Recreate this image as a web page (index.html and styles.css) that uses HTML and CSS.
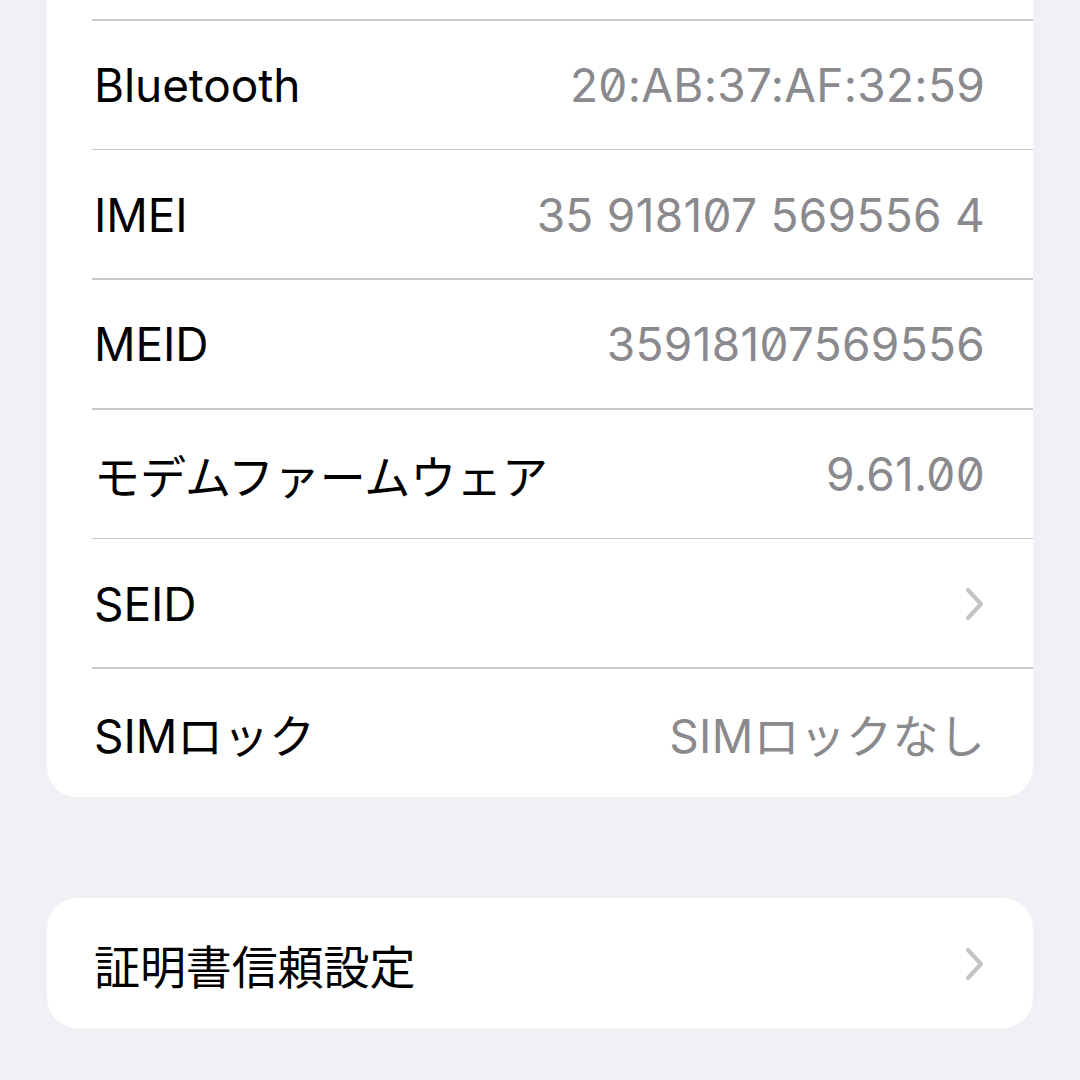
FILE: index.html
```html
<!DOCTYPE html>
<html lang="ja">
<head>
  <meta charset="UTF-8">
  <meta name="viewport" content="width=device-width, initial-scale=1.0">
  <title>情報</title>
  <link rel="stylesheet" href="styles.css">
</head>
<body>
  <div class="page">
    <div class="group group-top">
      <div class="row-stub"></div>
      <div class="row">
        <span class="label">Bluetooth</span>
        <span class="value">20:AB:37:AF:32:59</span>
      </div>
      <div class="row">
        <span class="label">IMEI</span>
        <span class="value">35 918107 569556 4</span>
      </div>
      <div class="row">
        <span class="label">MEID</span>
        <span class="value">35918107569556</span>
      </div>
      <div class="row">
        <span class="label">モデムファームウェア</span>
        <span class="value">9.61.00</span>
      </div>
      <div class="row">
        <span class="label">SEID</span>
        <svg class="chevron" viewBox="0 0 20 34" width="20" height="34">
          <path d="M3 3 L16 17 L3 31" fill="none" stroke="#c4c4c7" stroke-width="4.2" stroke-linecap="round" stroke-linejoin="round"/>
        </svg>
      </div>
      <div class="row">
        <span class="label">SIMロック</span>
        <span class="value">SIMロックなし</span>
      </div>
    </div>

    <div class="group">
      <div class="row">
        <span class="label">証明書信頼設定</span>
        <svg class="chevron" viewBox="0 0 20 34" width="20" height="34">
          <path d="M3 3 L16 17 L3 31" fill="none" stroke="#c4c4c7" stroke-width="4.2" stroke-linecap="round" stroke-linejoin="round"/>
        </svg>
      </div>
    </div>
  </div>
</body>
</html>
```

FILE: styles.css
```css
html, body {
  margin: 0;
  padding: 0;
  background-color: #f0f0f5;
}
body {
  font-family: Inter, "Noto Sans CJK JP", sans-serif;
  overflow: hidden;
  height: 1080px;
}
.page {
  padding: 0 47px;
}
.group {
  background-color: #fff;
  border-radius: 30px;
  overflow: hidden;
  margin-top: 101px;
}
.group-top {
  margin-top: 0;
  border-radius: 0 0 30px 30px;
}
.row-stub {
  height: 19px;
}
.row {
  height: 129.7px;
  display: flex;
  align-items: center;
  justify-content: space-between;
  padding: 2px 48px 0 47px;
  position: relative;
  box-sizing: border-box;
}
.row-stub + .row::before,
.row + .row::before {
  content: "";
  position: absolute;
  top: 0;
  left: 45px;
  right: 0;
  height: 1.5px;
  background-color: #c8c8cc;
}
.label {
  font-size: 46px;
  color: #000;
  letter-spacing: -0.1px;
}
.value {
  font-size: 46px;
  color: #8a8a8e;
  font-feature-settings: "zero";
  letter-spacing: 0.3px;
}
.chevron {
  display: block;
}
```
